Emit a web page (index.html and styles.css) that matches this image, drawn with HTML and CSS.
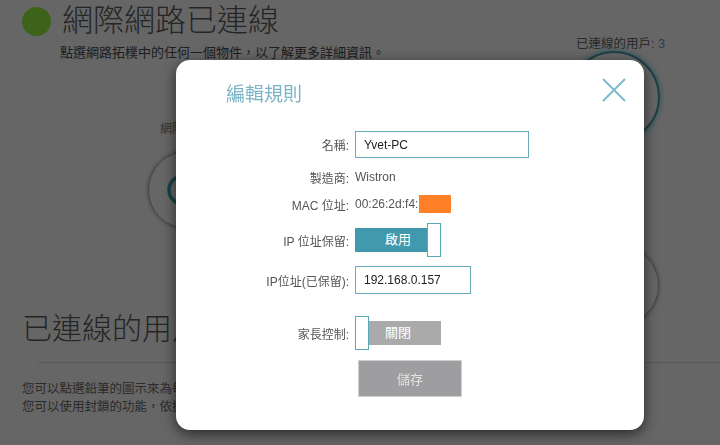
FILE: index.html
```html
<!DOCTYPE html>
<html lang="zh-tw">

<head>
    <meta charset="UTF-8">
    <title>編輯規則</title>
    <link rel="stylesheet" href="styles.css">
</head>

<body>
    <div class="page">
        <div class="status">
            <span class="dot"></span>
            <h1 class="status-title">網際網路已連線</h1>
        </div>
        <div class="hintrow">
            <p class="hint">點選網路拓樸中的任何一個物件，以了解更多詳細資訊。</p>
            <div class="count">已連線的用戶: <span class="count-num">3</span></div>
        </div>

        <!-- 拓樸圖 -->
        <div class="topology">
            <div class="node-label">網際網路</div>
            <div class="node node-internet">
                <svg class="globe" width="36" height="36" viewBox="0 0 36 36">
                    <circle cx="18" cy="18" r="14" fill="none" stroke="#3fa2b8" stroke-width="3.5"/>
                </svg>
            </div>
            <div class="node node-router"></div>
            <div class="node node-client"></div>
        </div>

        <h2 class="section-title">已連線的用戶</h2>
        <div class="rule"></div>
        <p class="desc">您可以點選鉛筆的圖示來為每個用戶編輯規則。<br>您可以使用封鎖的功能，依據用戶的需要限制存取。</p>
    </div>

    <!-- 遮罩 -->
    <div class="backdrop"></div>

    <div class="dialog">
        <div class="dialog-title">編輯規則</div>
        <svg class="close" width="24" height="24" viewBox="0 0 24 24">
            <path d="M1 1 L23 23 M23 1 L1 23" stroke="#7cbccb" stroke-width="2" fill="none"/>
        </svg>

        <div class="row row-name">
            <label class="row-label">名稱:</label>
            <input class="text-input name-input" type="text" value="Yvet-PC">
        </div>
        <div class="row row-vendor">
            <span class="row-label">製造商:</span>
            <span class="row-value">Wistron</span>
        </div>
        <div class="row row-mac">
            <span class="row-label">MAC 位址:</span>
            <span class="row-value">00:26:2d:f4:</span><span class="mask"></span>
        </div>
        <div class="row row-reserve">
            <span class="row-label">IP 位址保留:</span>
            <div class="toggle on">
                <span class="toggle-bar"></span>
                <span class="toggle-text">啟用</span>
                <span class="toggle-knob"></span>
            </div>
        </div>
        <div class="row row-ip">
            <label class="row-label">IP位址(已保留):</label>
            <input class="text-input ip-input" type="text" value="192.168.0.157">
        </div>
        <div class="row row-parent">
            <span class="row-label">家長控制:</span>
            <div class="toggle off">
                <span class="toggle-bar"></span>
                <span class="toggle-text">關閉</span>
                <span class="toggle-knob"></span>
            </div>
        </div>
        <div class="row row-save">
            <button class="save">儲存</button>
        </div>
    </div>
</body>

</html>
```

FILE: styles.css
```css
body {
    margin: 0;
    background-color: #ffffff;
    font-family: "Liberation Sans", "Noto Sans CJK TC", sans-serif;
    color: #666;
    overflow: hidden;
}

/* 背景頁面 */
.page {
    width: 720px;
    height: 445px;
}

.status {
    display: flex;
    align-items: center;
    height: 42px;
    padding-left: 22px;
}

.dot {
    width: 29px;
    height: 29px;
    border-radius: 50%;
    background-color: #98f540;
}

.status-title {
    margin: 0 0 0 11px;
    font-size: 31px;
    font-weight: 200;
    line-height: 40px;
    color: #5e5e5e;
}

.hintrow {
    display: flex;
    justify-content: space-between;
    height: 24px;
    margin-top: -10px;
}

.hint {
    margin: 0 0 0 60px;
    padding-top: 9px;
    font-size: 13px;
    line-height: 24px;
    color: #4d4d4d;
}

.count {
    margin-right: 55px;
    font-size: 12.5px;
    line-height: 24px;
    color: #666;
}

.count-num {
    color: #4ba8b8;
}

.topology {
    position: relative;
    height: 255px;
}

.node {
    position: absolute;
    border-radius: 50%;
    box-sizing: border-box;
}

.node-internet {
    left: 148px;
    top: 95px;
    width: 78px;
    height: 78px;
    border: 1px solid #aaa;
    box-shadow: 0 0 4px rgba(0, 0, 0, 0.4);
}

.globe {
    position: absolute;
    left: 16px;
    top: 20px;
}

.node-label {
    position: absolute;
    left: 160px;
    top: 63px;
    font-size: 12px;
    color: #808080;
}

.node-router {
    left: 568px;
    top: -5px;
    width: 92px;
    height: 92px;
    border: 2px solid #4aa3b4;
    box-shadow: 0 0 6px #5fd0e6;
}

.node-client {
    left: 578px;
    top: 189px;
    width: 81px;
    height: 81px;
    border: 1px solid #aaa;
    box-shadow: 0 0 4px rgba(0, 0, 0, 0.4);
}

.section-title {
    margin: 0 0 0 22px;
    font-size: 30px;
    font-weight: 200;
    line-height: 36px;
    color: #5e5e5e;
}

.rule {
    height: 1px;
    margin: 15px 0 0 38px;
    background-color: #d9d9d9;
}

.desc {
    margin: 17px 0 0 22px;
    font-size: 12.5px;
    line-height: 18px;
    color: #6b6b6b;
}

.backdrop {
    position: fixed;
    left: 0;
    top: 0;
    right: 0;
    bottom: 0;
    background-color: rgba(0, 0, 0, 0.6);
}

/* 編輯規則 視窗 */
.dialog {
    position: absolute;
    left: 176px;
    top: 60px;
    width: 468px;
    height: 370px;
    background-color: #fff;
    border-radius: 14px;
    box-shadow: 0 4px 14px rgba(0, 0, 0, 0.6);
}

.dialog-title {
    padding: 22px 0 0 50px;
    font-size: 19px;
    line-height: 26px;
    color: #7ab4c6;
}

.close {
    position: absolute;
    right: 18px;
    top: 18px;
}

.row {
    display: flex;
    align-items: center;
}

.row-label {
    width: 173px;
    margin-right: 6px;
    text-align: right;
    font-size: 12px;
    color: #555;
}

.row-value {
    font-size: 12px;
    color: #555;
}

.row-name {
    margin-top: 23px;
    height: 27px;
}

.row-vendor {
    margin-top: 5px;
    height: 28px;
}

.row-mac {
    margin-top: 4px;
    height: 18px;
}

.row-reserve {
    margin-top: 10px;
    height: 34px;
}

.row-ip {
    margin-top: 9px;
    height: 28px;
}

.row-parent {
    margin-top: 22px;
    height: 34px;
}

.row-save {
    margin-top: 10px;
    height: 37px;
    padding-left: 182px;
}

.text-input {
    box-sizing: border-box;
    padding: 0 0 0 8px;
    border: 1px solid #6aacbb;
    font-family: "Liberation Sans", "Noto Sans CJK TC", sans-serif;
    font-size: 12px;
    color: #222;
    outline: none;
}

.name-input {
    width: 174px;
    height: 27px;
}

.ip-input {
    width: 116px;
    height: 28px;
}

.mask {
    width: 32px;
    height: 18px;
    margin-left: 1px;
    background-color: #ff8027;
}

/* 開關 */
.toggle {
    position: relative;
    width: 86px;
    height: 34px;
}

.toggle-bar {
    position: absolute;
    top: 5px;
    bottom: 5px;
}

.toggle-text {
    position: absolute;
    left: 0;
    right: 0;
    top: 0;
    line-height: 34px;
    text-align: center;
    font-size: 13px;
    color: #fff;
}

.toggle-knob {
    position: absolute;
    top: 0;
    width: 14px;
    height: 34px;
    box-sizing: border-box;
    background-color: #fff;
    border: 1.5px solid #5aa8b8;
}

.on .toggle-bar {
    left: 0;
    right: 13px;
    background-color: #4199ae;
}

.on .toggle-knob {
    right: 0;
}

.off .toggle-bar {
    left: 13px;
    right: 0;
    background-color: #aaaaaa;
}

.off .toggle-knob {
    left: 0;
}

.save {
    width: 104px;
    height: 37px;
    background-color: #9e9ea0;
    border: 1px solid #cfcfcf;
    font-family: "Liberation Sans", "Noto Sans CJK TC", sans-serif;
    font-size: 13px;
    color: #e2e2e2;
}
```
